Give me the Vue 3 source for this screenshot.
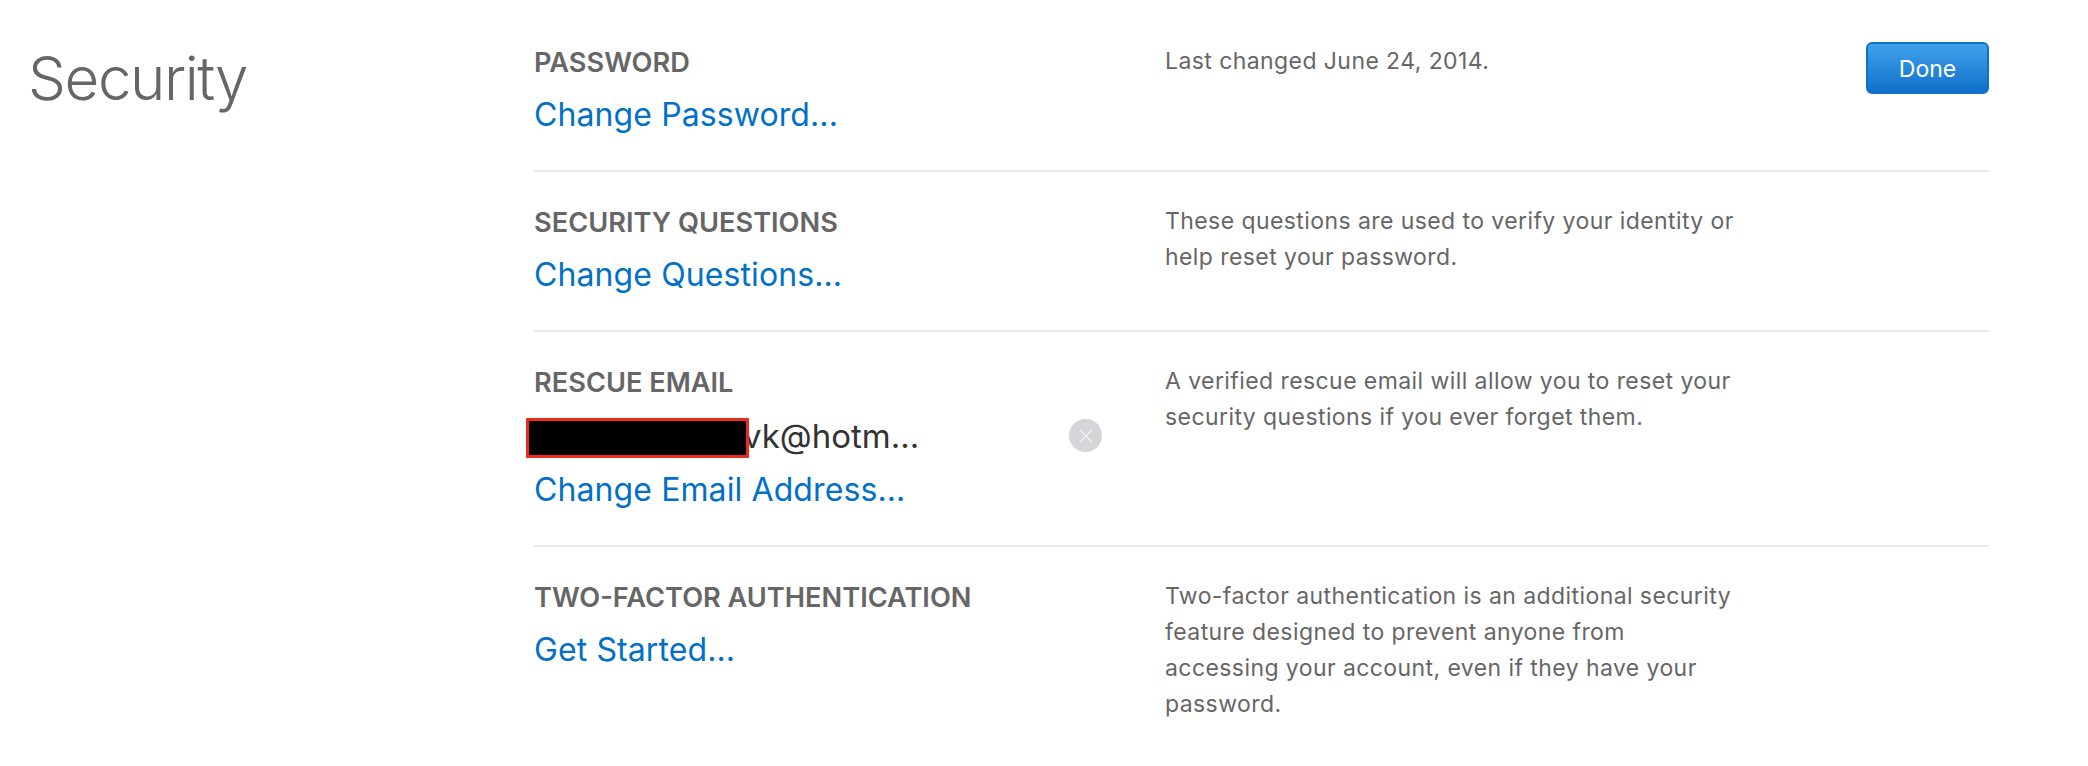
<script setup>
const rows = [
  { key: 'pw', label: 'PASSWORD', link: 'Change Password...', desc: ['Last changed June 24, 2014.'] },
  { key: 'sq', label: 'SECURITY QUESTIONS', link: 'Change Questions...', desc: ['These questions are used to verify your identity or', 'help reset your password.'] },
  { key: 're', label: 'RESCUE EMAIL', email: 'vk@hotm...', link: 'Change Email Address...', desc: ['A verified rescue email will allow you to reset your', 'security questions if you ever forget them.'] },
  { key: 'tf', label: 'TWO-FACTOR AUTHENTICATION', link: 'Get Started...', desc: ['Two-factor authentication is an additional security', 'feature designed to prevent anyone from', 'accessing your account, even if they have your', 'password.'] },
]
</script>

<template>
  <div class="page">
    <h1 class="title">Security</h1>
    <div class="main">
      <section v-for="r in rows" :key="r.key" class="row" :class="'row-' + r.key">
        <div class="left">
          <div class="label">{{ r.label }}</div>
          <div v-if="r.email" class="email">
            <span class="redact"></span>
            <span class="addr">{{ r.email }}</span>
            <span class="clear">
              <svg width="14" height="14" viewBox="0 0 14 14"><path d="M1 1 13 13M13 1 1 13" stroke="#f4f4f6" stroke-width="1.2" fill="none"/></svg>
            </span>
          </div>
          <a class="link">{{ r.link }}</a>
        </div>
        <div class="desc">
          <div v-for="d in r.desc" :key="d">{{ d }}</div>
        </div>
        <button v-if="r.key === 'pw'" class="done">Done</button>
      </section>
    </div>
  </div>
</template>

<style>
html, body { background: #fff; }
</style>

<style scoped>
.page {
  display: flex;
  width: 2088px;
  height: 766px;
  overflow: hidden;
  background: #fff;
  font-family: Inter, "Liberation Sans", sans-serif;
}
.title {
  margin: 0;
  width: 534px;
  flex: none;
  padding: 40px 0 0 28px;
  box-sizing: border-box;
  font-size: 60px;
  line-height: 76px;
  font-weight: 300;
  letter-spacing: -1.4px;
  color: #666;
}
.main { width: 1455px; flex: none; }
.row {
  display: flex;
  align-items: flex-start;
  box-sizing: border-box;
  padding-top: 46px;
  border-bottom: 2px solid #e8e8e8;
}
.row-pw { height: 172px; }
.row-sq { height: 160px; padding-top: 34px; }
.row-re { height: 215px; padding-top: 34px; }
.row-tf { border-bottom: 0; padding-top: 34px; }
.left { width: 631px; flex: none; }
.label {
  font-size: 27.2px;
  line-height: 34px;
  font-weight: 600;
  color: #666;
}
.link {
  display: block;
  margin-top: 15px;
  font-size: 32px;
  line-height: 40px;
  letter-spacing: 0.1px;
  color: #0070c9;
}
.email {
  display: flex;
  align-items: center;
  position: relative;
  height: 40px;
  margin-top: 16px;
  font-size: 33px;
  color: #333;
}
.email + .link { margin-top: 14px; }
.redact {
  position: relative;
  z-index: 1;
  width: 223px;
  height: 40px;
  margin: 3px 0 0 -8px;
  box-sizing: border-box;
  background: #000;
  border: 3px solid #ee2a1e;
  flex: none;
}
.addr { margin-left: -6px; }
.clear {
  position: absolute;
  left: 535px;
  top: 3px;
  width: 33px;
  height: 33px;
  border-radius: 50%;
  background: #d4d4d9;
  display: flex;
  align-items: center;
  justify-content: center;
}
.desc {
  width: 640px;
  flex: none;
  margin-top: -3px;
  font-size: 23px;
  line-height: 36px;
  letter-spacing: 0.42px;
  color: #666;
}
.done {
  margin-left: auto;
  margin-top: -4px;
  width: 123px;
  height: 52px;
  box-sizing: border-box;
  border: 2px solid #0f72c8;
  border-radius: 6px;
  background: linear-gradient(#42a1ec, #0f70c9);
  color: #fff;
  font: 400 23px Inter, "Liberation Sans", sans-serif;
  padding: 2px 0 0;
}
</style>
